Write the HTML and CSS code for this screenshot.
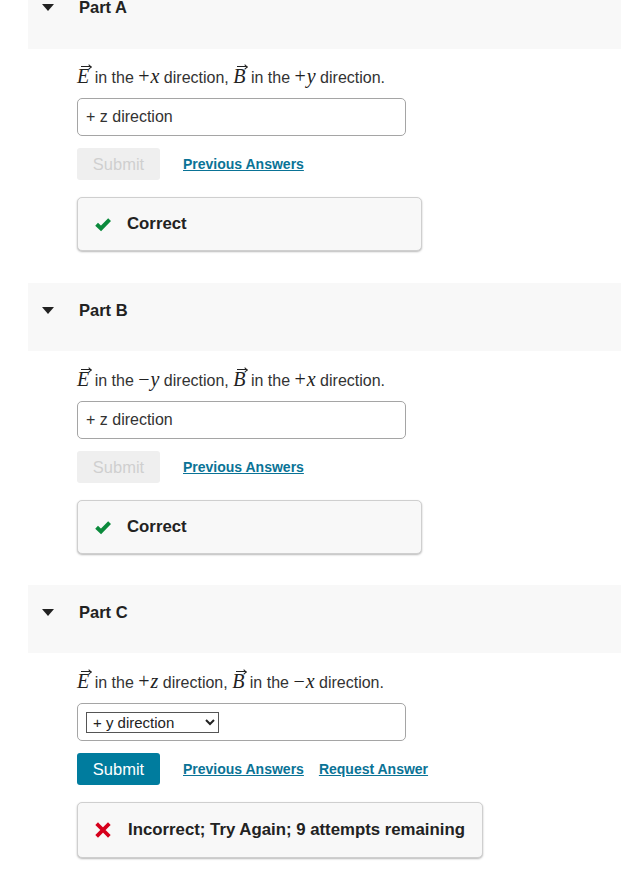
FILE: index.html
```html
<!DOCTYPE html>
<html>
<head>
<meta charset="utf-8">
<link rel="stylesheet" href="styles.css">
</head>
<body>
<div class="page">
  <section class="part first">
    <div class="part-head"><span class="caret"></span><span class="part-title">Part A</span></div>
    <div class="part-body">
      <p class="question"><span class="vec">E</span> in the <span class="m"><span class="op">+</span><i>x</i></span> direction, <span class="vec">B</span> in the <span class="m"><span class="op">+</span><i>y</i></span> direction.</p>
      <div class="answer"><span class="answer-text">+ z direction</span></div>
      <div class="actions">
        <button class="btn disabled">Submit</button>
        <a class="link" href="#">Previous Answers</a>
      </div>
      <div class="feedback ok">
        <svg class="icon" viewBox="0 0 16 16" width="16" height="16"><path d="M1.6 8.2 L6 12.4 L14.6 3.6" fill="none" stroke="#0b8a3c" stroke-width="4" stroke-linecap="butt" stroke-linejoin="miter"/></svg>
        <span>Correct</span>
      </div>
    </div>
  </section>

  <section class="part">
    <div class="part-head"><span class="caret"></span><span class="part-title">Part B</span></div>
    <div class="part-body">
      <p class="question"><span class="vec">E</span> in the <span class="m"><span class="op">−</span><i>y</i></span> direction, <span class="vec">B</span> in the <span class="m"><span class="op">+</span><i>x</i></span> direction.</p>
      <div class="answer"><span class="answer-text">+ z direction</span></div>
      <div class="actions">
        <button class="btn disabled">Submit</button>
        <a class="link" href="#">Previous Answers</a>
      </div>
      <div class="feedback ok">
        <svg class="icon" viewBox="0 0 16 16" width="16" height="16"><path d="M1.6 8.2 L6 12.4 L14.6 3.6" fill="none" stroke="#0b8a3c" stroke-width="4" stroke-linecap="butt" stroke-linejoin="miter"/></svg>
        <span>Correct</span>
      </div>
    </div>
  </section>

  <section class="part">
    <div class="part-head"><span class="caret"></span><span class="part-title">Part C</span></div>
    <div class="part-body">
      <p class="question"><span class="vec">E</span> in the <span class="m"><span class="op">+</span><i>z</i></span> direction, <span class="vec">B</span> in the <span class="m"><span class="op">−</span><i>x</i></span> direction.</p>
      <div class="answer select-answer">
        <select class="sel"><option>+ y direction</option></select>
      </div>
      <div class="actions">
        <button class="btn primary">Submit</button>
        <a class="link" href="#">Previous Answers</a>
        <a class="link near" href="#">Request Answer</a>
      </div>
      <div class="feedback bad">
        <svg class="icon" viewBox="0 0 16 16" width="16" height="16"><path d="M3 3 L13 13 M13 3 L3 13" fill="none" stroke="#d6001c" stroke-width="3.8" stroke-linecap="square"/></svg>
        <span>Incorrect; Try Again; 9 attempts remaining</span>
      </div>
    </div>
  </section>
</div>
</body>
</html>
```
FILE: styles.css
```css
html, body {
  margin: 0;
  padding: 0;
  background: #fff;
}
body {
  font-family: "Liberation Sans", Arial, sans-serif;
  color: #333;
  overflow: hidden;
}
.page {
  padding-left: 28px;
}
.part {
  margin-bottom: 31px;
}
.part.first {
  margin-top: -19px;
  margin-bottom: 32px;
}
.part-head {
  height: 68px;
  background: #f8f8f8;
  display: flex;
  align-items: flex-start;
  padding-top: 17px;
  box-sizing: border-box;
}
.first .part-head {
  padding-top: 16px;
}
.caret {
  width: 0;
  height: 0;
  border-left: 6.5px solid transparent;
  border-right: 6.5px solid transparent;
  border-top: 7px solid #222;
  margin-left: 14px;
  margin-top: 7px;
}
.part-title {
  margin-left: 25px;
  font-size: 16.5px;
  font-weight: bold;
  color: #222;
  line-height: 20px;
}
.part-body {
  padding-left: 49px;
}
.question {
  margin: 0;
  padding-top: 16px;
  font-size: 16px;
  line-height: 24px;
  height: 24px;
  color: #333;
  white-space: nowrap;
}
.first .question {
  padding-top: 15px;
}
.m {
  font-family: "Liberation Serif", "DejaVu Serif", serif;
  color: #222;
}
.m .op {
  font-size: 20px;
  margin-right: 1px;
}
.m i {
  font-size: 20px;
}
.vec {
  position: relative;
  display: inline-block;
  font-family: "Liberation Serif", serif;
  font-style: italic;
  font-size: 20px;
  color: #222;
  margin-right: 1px;
}
.vec::after {
  content: "";
  position: absolute;
  left: 4px;
  top: 2px;
  width: 10px;
  height: 1.3px;
  background: #222;
}
.vec::before {
  content: "";
  position: absolute;
  left: 10px;
  top: 0.5px;
  width: 4px;
  height: 4px;
  border-top: 1.4px solid #222;
  border-right: 1.4px solid #222;
  transform: rotate(45deg);
  box-sizing: border-box;
}
.answer {
  margin-top: 10px;
  width: 329px;
  height: 38px;
  box-sizing: border-box;
  border: 1px solid #a5a5a5;
  border-radius: 5px;
  display: flex;
  align-items: center;
  padding-left: 8px;
}
.answer-text {
  font-size: 16px;
  color: #333;
}
.sel {
  width: 133px;
  height: 21px;
  font-family: "Liberation Sans", Arial, sans-serif;
  font-size: 15px;
  color: #222;
  border: 1px solid #555;
  border-radius: 0;
  background: #fff;
  padding: 0 0 0 2px;
  margin: 0;
}
.actions {
  margin-top: 12px;
  display: flex;
  align-items: center;
}
.btn {
  width: 83px;
  height: 32px;
  border: none;
  border-radius: 3px;
  font-family: "Liberation Sans", Arial, sans-serif;
  font-size: 16.5px;
  padding: 0;
  margin: 0;
}
.btn.disabled {
  background: #efefef;
  color: #cfcfcf;
}
.btn.primary {
  background: #007c9e;
  color: #fff;
}
.link {
  margin-left: 23px;
  font-size: 14px;
  font-weight: bold;
  color: #0a7396;
  text-decoration: underline;
}
.link.near {
  margin-left: 15px;
}
.feedback {
  margin-top: 17px;
  display: inline-flex;
  align-items: center;
  min-width: 345px;
  height: 54px;
  box-sizing: border-box;
  background: #f8f8f8;
  border: 1px solid #cfcfcf;
  border-radius: 5px;
  box-shadow: 0 1px 2px rgba(0,0,0,0.28);
  padding: 0 17px 0 17px;
  font-size: 16.8px;
  font-weight: bold;
  color: #222;
}
.feedback .icon {
  margin-right: 16px;
  flex: none;
}
.feedback.bad .icon {
  margin-right: 17px;
}
.feedback.bad {
  height: 56px;
}
```
